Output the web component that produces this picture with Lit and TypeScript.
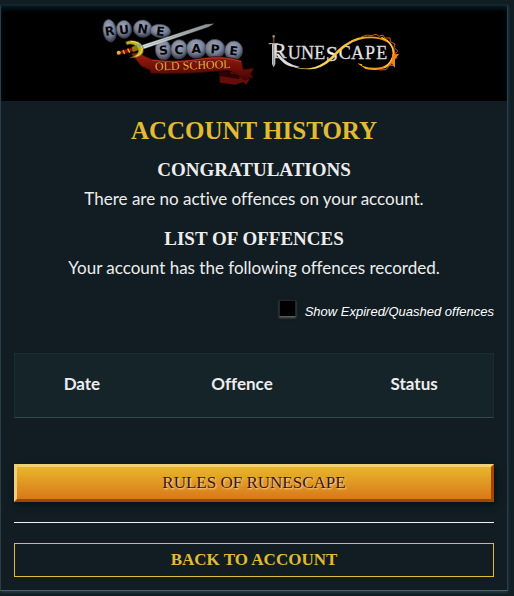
import { LitElement, html, css, svg } from "lit";
import { customElement, state } from "lit/decorators.js";

interface Stone {
  letter: string;
  x: number;
  y: number;
  rx: number;
  ry: number;
  tilt: number;
}

const STONES: Stone[] = [
  { letter: "R", x: 56, y: 68, rx: 20, ry: 34, tilt: -8 },
  { letter: "U", x: 99, y: 64, rx: 23, ry: 27, tilt: -6 },
  { letter: "N", x: 155, y: 62, rx: 28, ry: 26, tilt: 8 },
  { letter: "E", x: 208, y: 69, rx: 31, ry: 20, tilt: 6 },
  { letter: "S", x: 217, y: 126, rx: 24, ry: 31, tilt: -6 },
  { letter: "C", x: 264, y: 124, rx: 25, ry: 29, tilt: 6 },
  { letter: "A", x: 316, y: 122, rx: 30, ry: 29, tilt: 0 },
  { letter: "P", x: 372, y: 123, rx: 30, ry: 29, tilt: 4 },
  { letter: "E", x: 428, y: 128, rx: 27, ry: 29, tilt: 6 },
];

@customElement("old-school-logo")
export class OldSchoolLogo extends LitElement {
  static styles = css`
    :host { display: block; }
    svg { display: block; width: 170px; height: 90px; }
    .rune { font: bold 37px "DejaVu Sans", sans-serif; fill: #06070a; text-anchor: middle; }
    .banner { font: 36px "Liberation Serif", serif; fill: #f0ac3c; stroke: #3b0d04; stroke-width: 2; paint-order: stroke; }
  `;

  render() {
    return html`<svg viewBox="0 0 510 270" role="img" aria-label="Old School RuneScape">
      <defs>
        <radialGradient id="stone" cx="45%" cy="35%" r="65%">
          <stop offset="0" stop-color="#a3a9bc" />
          <stop offset=".6" stop-color="#7a8196" />
          <stop offset="1" stop-color="#343947" />
        </radialGradient>
        <linearGradient id="ribbon" x1="0" y1="0" x2="0" y2="1">
          <stop offset="0" stop-color="#9c2015" />
          <stop offset=".5" stop-color="#761009" />
          <stop offset="1" stop-color="#430604" />
        </linearGradient>
        <linearGradient id="blade" x1="0" y1="0" x2="1" y2="0">
          <stop offset="0" stop-color="#e8efef" />
          <stop offset="1" stop-color="#858b8e" />
        </linearGradient>
      </defs>
      ${STONES.map(
        (s) => svg`<g transform="rotate(${s.tilt} ${s.x} ${s.y})">
          <ellipse cx=${s.x} cy=${s.y} rx=${s.rx} ry=${s.ry} fill="url(#stone)" stroke="#3d4253" stroke-width="2" />
          <text class="rune" x=${s.x} y=${s.y + 14}>${s.letter}</text>
        </g>`
      )}
      <path d="M386 190 L414 194 L452 184 L480 184 L466 202 L476 214 L466 230 L456 223 L432 230 L386 224 Z" fill="#650d08" />
      <path d="M386 190 L420 196 L448 202 L444 213 L386 204 Z" fill="#2c0302" />
      <path d="M120 136 L145 134 Q160 146 184 154 Q260 164 340 149 Q400 140 452 158 L457 185 L488 181 L479 197 L487 208 L460 216 L446 205 Q424 184 390 188 Q300 198 220 197 L180 196 L177 187 L150 174 Z" fill="url(#ribbon)" stroke="#300402" stroke-width="2" />
      <path d="M184 157 Q260 167 340 152 Q400 144 450 161" fill="none" stroke="#b23622" stroke-width="3" />
      <path d="M148 113 L345 49 L369 47 L352 57 L157 123 Z" fill="url(#blade)" stroke="#52585c" stroke-width="1" />
      <path d="M152 118 L350 52" stroke="#8e9699" stroke-width="2" />
      <path d="M80 131 L128 118 L136 128 L86 139 Z" fill="#a8120a" stroke="#4b0703" stroke-width="2" />
      <path d="M96 126 L101 138 M110 122 L116 134" stroke="#d8b42a" stroke-width="4" />
      <circle cx="83" cy="134" r="6" fill="#d6bd27" />
      <path d="M104 102 Q118 94 142 102 Q162 114 156 134 Q148 150 118 149 Q140 142 142 130 Q140 114 124 109 Q114 107 108 111 Z" fill="#c7ae22" stroke="#605008" stroke-width="2" />
      <path d="M119 100 Q149 101 154 123 Q151 140 136 145" fill="none" stroke="#efe366" stroke-width="3" />
      <path d="M122 118 L136 111 L142 126 L126 132 Z" fill="#8e7814" />
      <circle cx="145" cy="114" r="6" fill="#74b6ad" />
      <g transform="rotate(-2 300 180)">
        <text class="banner" x="192" y="184">OLD SCHOOL</text>
      </g>
    </svg>`;
  }
}

@customElement("runescape-logo")
export class RunescapeLogo extends LitElement {
  static styles = css`
    :host { display: block; }
    svg { display: block; width: 155px; height: 90px; }
    text { font-family: "Liberation Serif", serif; fill: url(#silver); stroke: #d5d7da; stroke-width: 1; }
    .initial { font-size: 66px; }
    .letters { font-size: 54px; }
  `;

  render() {
    return html`<svg viewBox="15 -36 465 270" role="img" aria-label="RuneScape">
      <defs>
        <linearGradient id="silver" x1="0" y1="0" x2="0" y2="1">
          <stop offset="0" stop-color="#b9bcc0" />
          <stop offset=".5" stop-color="#f6f6f7" />
          <stop offset="1" stop-color="#a2a6ab" />
        </linearGradient>
        <linearGradient id="fire" gradientUnits="userSpaceOnUse" x1="80" y1="0" x2="430" y2="0">
          <stop offset="0" stop-color="#e8e8e8" />
          <stop offset=".16" stop-color="#f4dc72" />
          <stop offset=".5" stop-color="#f5c93c" />
          <stop offset=".8" stop-color="#f39a18" />
          <stop offset="1" stop-color="#e45c0a" />
        </linearGradient>
      </defs>
      <text class="initial" x="48" y="114">R</text>
      <path d="M68 101 Q90 132 132 141 Q104 144 84 130 Q68 116 60 101 Z" fill="#dcdddf" />
      <text class="letters" x="95" y="118">U</text>
      <text class="letters" x="135" y="118">N</text>
      <text class="letters" x="175" y="118">E</text>
      <text class="initial" x="209" y="123">S</text>
      <text class="letters" x="248" y="118">C</text>
      <text class="letters" x="285" y="118">A</text>
      <text class="letters" x="327" y="118">P</text>
      <text class="letters" x="361" y="118">E</text>
      <path d="M48 72 L58 72 L58 132 L53 142 L48 132 Z" fill="#c2c6ca" />
      <path d="M53 74 L53 136" stroke="#6d7378" stroke-width="2" />
      <path d="M38 69 L66 69 L68 73 L55 72 L38 73 Z" fill="#a7aaaf" />
      <path d="M53 51 L53 70" stroke="#69432f" stroke-width="5" />
      <circle cx="53" cy="49" r="4" fill="#8d8280" />
      <path d="M90 132 Q128 148 160 145 Q190 142 224 112 Q264 65 305 53 Q364 42 400 65 Q433 98 405 134 Q375 157 329 147 L304 130 L319 133 L318 137 Q370 153 397 130 Q425 97 396 68 Q360 48 310 59 Q272 68 230 117 Q194 149 160 148 Q122 149 90 132 Z" fill="url(#fire)" />
      <path d="M316 50 L335 45 L345 47 L360 43 L369 49 L381 45 L386 54 L402 54 L403 65 L417 72 L414 82 L425 93 L418 101 L423 113 L414 119 L414 137 L401 135 L390 149 L371 150" fill="none" stroke="#d95708" stroke-width="3" />
      <path d="M376 52 Q411 66 412 99 Q410 126 385 143" fill="none" stroke="#ffcc37" stroke-width="4" />
      <path d="M409 104 L430 101 L417 117 L417 144 L407 130 Z" fill="#ef8412" />
    </svg>`;
  }
}

@customElement("app-root")
export class AppRoot extends LitElement {
  @state() private showExpired = false;

  static styles = css`
    :host {
      display: flow-root;
      box-sizing: border-box;
      min-height: 100vh;
      background: #111e24;
      color: #ededed;
      font-family: Lato, "Open Sans", sans-serif;
      font-variant-ligatures: none;
    }
    .panel {
      margin: 5px 6px 5px 0;
      border: 1px solid #2b3d46;
      border-top-color: #10252e;
      border-bottom-color: #4b616c;
      background: #111d22;
      box-shadow: 0 1px 3px #2b4651;
    }
    .brand {
      display: flex;
      justify-content: center;
      padding: 2px 2px 3px 0;
      background: #000;
      box-shadow: inset 0 3px 4px #061a23;
    }
    .content { padding: 15px 13px 13px; }
    h1, h2, p { margin: 0; text-align: center; }
    h1, h2, .rules, .back { font-family: "Liberation Serif", serif; text-transform: uppercase; }
    h1 { font-size: 25px; line-height: 30px; color: #e1bb34; margin-bottom: 12px; }
    h2 { font-size: 19px; line-height: 24px; margin-bottom: 5px; }
    p { font-size: 17px; line-height: 24px; }
    .lead { margin-bottom: 16px; }
    .filter {
      display: flex;
      justify-content: flex-end;
      align-items: center;
      gap: 9px;
      margin: 20px 0 29px;
      font: italic 13px/24px "Liberation Sans", sans-serif;
      color: #fff;
    }
    .filter input {
      appearance: none;
      width: 17px;
      height: 17px;
      margin: 0 0 7px;
      background: #000;
      border: 1px solid #1d292e;
      border-bottom-color: #5a5a5a;
      box-shadow: 0 1px 2px #55595c;
    }
    .filter input:checked { background: #e1bb34; }
    table {
      width: 100%;
      table-layout: fixed;
      border-collapse: separate;
      border-spacing: 0;
      background: #152429;
      border: 1px solid #1b2c33;
      border-bottom-color: #34464f;
    }
    th { padding: 18px 0 21px; font-size: 17px; line-height: 24px; font-weight: bold; }
    .date { width: 28%; }
    .offence { width: 39%; }
    .rules {
      display: block;
      width: 100%;
      height: 38px;
      margin: 46px 0 20px;
      padding: 0;
      border: 3px solid;
      border-color: #efcf78 #a34404 #a34404 #efcf78;
      background: linear-gradient(#e8b62a, #d9781a);
      box-shadow: 2px 3px 6px #04141b;
      color: #3d1414;
      font-size: 17px;
      text-shadow: 1px 1px 2px #fbe3b4;
      cursor: pointer;
    }
    hr { margin: 0 0 20px; border: 0; border-top: 1px solid #f2f2f2; }
    .back {
      display: block;
      border: 1px solid #e1bb34;
      color: #e1bb34;
      font-size: 17px;
      font-weight: bold;
      line-height: 32px;
      text-align: center;
      text-decoration: none;
    }
  `;

  private toggle(e: Event) {
    this.showExpired = (e.target as HTMLInputElement).checked;
  }

  render() {
    return html`<main class="panel">
      <header class="brand">
        <old-school-logo></old-school-logo>
        <runescape-logo></runescape-logo>
      </header>
      <div class="content">
        <h1>Account History</h1>
        <h2>Congratulations</h2>
        <p class="lead">There are no active offences on your account.</p>
        <h2>List of Offences</h2>
        <p>Your account has the following offences recorded.</p>
        <div class="filter">
          <input id="expired" type="checkbox" .checked=${this.showExpired} @change=${this.toggle} />
          <label for="expired">Show Expired/Quashed offences</label>
        </div>
        <table>
          <thead>
            <tr>
              <th class="date" scope="col">Date</th>
              <th class="offence" scope="col">Offence</th>
              <th scope="col">Status</th>
            </tr>
          </thead>
        </table>
        <button class="rules" type="button">Rules of RuneScape</button>
        <hr />
        <a class="back" href="#account">Back to Account</a>
      </div>
    </main>`;
  }
}
